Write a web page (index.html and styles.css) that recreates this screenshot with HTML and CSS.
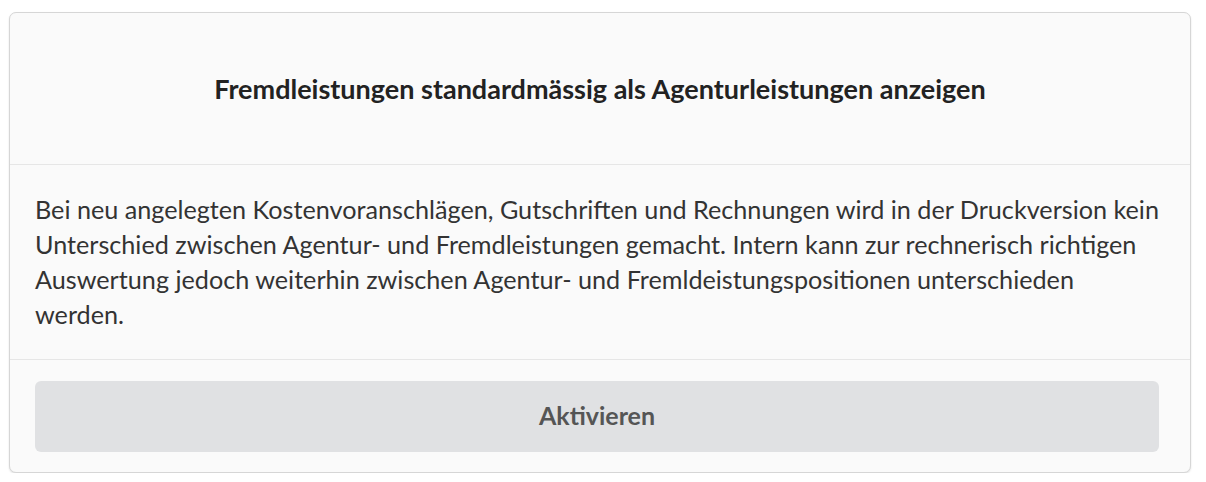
FILE: index.html
```html
<!DOCTYPE html>
<html lang="de">

<head>
    <meta charset="UTF-8">
    <title>Agenturleistungen</title>
    <link rel="stylesheet" href="styles.css">
</head>

<body>

    <div class="setting-card">
        <div class="setting-header">
            <h2>Fremdleistungen standardmässig als Agenturleistungen anzeigen</h2>
        </div>

        <div class="setting-body">
            <p>Bei neu angelegten Kostenvoranschlägen, Gutschriften und Rechnungen wird in der Druckversion kein Unterschied zwischen Agentur- und Fremdleistungen gemacht. Intern kann zur rechnerisch richtigen Auswertung jedoch weiterhin zwischen Agentur- und Fremldeistungspositionen unterschieden werden.</p>
        </div>

        <div class="setting-footer">
            <button class="activate-btn">Aktivieren</button>
        </div>
    </div>

</body>

</html>
```

FILE: styles.css
```css
body {
    font-family: 'Lato', sans-serif;
    margin: 0;
    padding: 12px 15px 0 9px;
    background-color: #ffffff;
}

.setting-card {
    background-color: #fafafa;
    border: 1px solid #d6d6d6;
    border-radius: 7px;
    box-shadow: 0 1px 2px rgba(0, 0, 0, 0.12);
    height: 459px;
    display: flex;
    flex-direction: column;
}

.setting-header {
    height: 151px;
    display: flex;
    align-items: center;
    justify-content: center;
    border-bottom: 1px solid #e6e6e6;
}

.setting-header h2 {
    margin: 0;
    font-size: 27px;
    font-weight: bold;
    color: #222222;
}

.setting-body {
    height: 195px;
    padding: 0 25px;
    display: flex;
    align-items: center;
    border-bottom: 1px solid #e6e6e6;
    box-sizing: border-box;
}

.setting-body p {
    margin: 0;
    font-size: 25.2px;
    line-height: 35px;
    color: #333333;
}

.setting-footer {
    flex: 1;
    padding: 21px 31px 20px 25px;
    display: flex;
}

.activate-btn {
    flex: 1;
    border: none;
    border-radius: 6px;
    background-color: #e0e1e3;
    font-family: 'Lato', sans-serif;
    font-size: 25px;
    font-weight: bold;
    color: #555555;
    padding: 0 0 4px;
    cursor: pointer;
}
```
